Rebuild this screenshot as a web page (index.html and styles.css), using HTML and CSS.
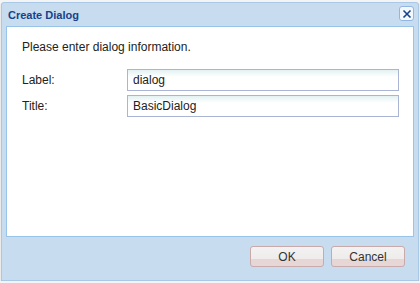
FILE: index.html
```html
<!DOCTYPE html>
<html lang="en">
<head>
    <meta charset="UTF-8">
    <title>Create Dialog</title>
    <link rel="stylesheet" href="styles.css">
</head>
<body>
    <div class="window">
        <div class="window-header">
            <span class="window-title">Create Dialog</span>
            <button class="close-btn" type="button" aria-label="Close">
                <svg width="10" height="10" viewBox="0 0 10 10">
                    <path d="M1.5 1.5 L8.5 8.5 M8.5 1.5 L1.5 8.5" stroke="#15428b" stroke-width="1.6" fill="none"/>
                </svg>
            </button>
        </div>

        <!-- Form Body -->
        <div class="window-body">
            <p class="intro">Please enter dialog information.</p>
            <div class="field-row">
                <label for="label" class="field-label">Label:</label>
                <input type="text" id="label" class="field-input" value="dialog">
            </div>
            <div class="field-row">
                <label for="title" class="field-label">Title:</label>
                <input type="text" id="title" class="field-input" value="BasicDialog">
            </div>
        </div>

        <!-- Buttons -->
        <div class="window-footer">
            <button type="button" class="btn">OK</button>
            <button type="button" class="btn">Cancel</button>
        </div>
    </div>
</body>
</html>
```

FILE: styles.css
```css
body {
    margin: 0;
    padding: 0;
    background: #f4f4f4;
    font-family: "Liberation Sans", Arial, sans-serif;
    font-size: 12px;
    color: #222;
}

/* Window Frame */
.window {
    margin: 2px 1px 0 1px;
    width: 418px;
    height: 279px;
    box-sizing: border-box;
    border: 1px solid #a8c8e6;
    border-radius: 3px 3px 0 0;
    background: #c7dcee;
    box-shadow: 0 1px 1px #9a9a9a;
    display: flex;
    flex-direction: column;
}

/* Title Bar */
.window-header {
    height: 23px;
    display: flex;
    align-items: center;
    justify-content: space-between;
    padding: 0 4px 0 6px;
}

.window-title {
    font-weight: bold;
    font-size: 11px;
    color: #15428b;
}

.close-btn {
    width: 15px;
    height: 15px;
    margin-top: -2px;
    padding: 0;
    border: 1px solid #8fb6e4;
    border-radius: 3px;
    background: #f4f8fd;
    display: flex;
    align-items: center;
    justify-content: center;
}

/* Content Area */
.window-body {
    margin: 0 4px;
    height: 211px;
    box-sizing: border-box;
    border: 1px solid #99c4ea;
    background: #fff;
    padding: 12px 0 0 15px;
}

.intro {
    margin: 0 0 14px 0;
    line-height: 16px;
}

.field-row {
    display: flex;
    align-items: center;
    margin-bottom: 4px;
}

.field-label {
    width: 105px;
}

.field-input {
    width: 272px;
    height: 22px;
    box-sizing: border-box;
    border: 1px solid #aab5d6;
    padding: 0 5px;
    font-family: inherit;
    font-size: 12px;
    color: #222;
    background: linear-gradient(#e4f1f1, #ffffff 7px);
}

/* Footer Buttons */
.window-footer {
    flex: 1;
    display: flex;
    justify-content: flex-end;
    align-items: flex-start;
    gap: 7px;
    padding: 9px 13px 0 0;
}

.btn {
    width: 74px;
    height: 21px;
    border: 1px solid #c9aaaa;
    border-radius: 3px;
    background: linear-gradient(#f3f1f1 0, #efebeb 12px, #e6d6d6 12px, #e6d6d6 100%);
    font-family: inherit;
    font-size: 12px;
    color: #333;
    padding: 0;
    cursor: pointer;
}
```
